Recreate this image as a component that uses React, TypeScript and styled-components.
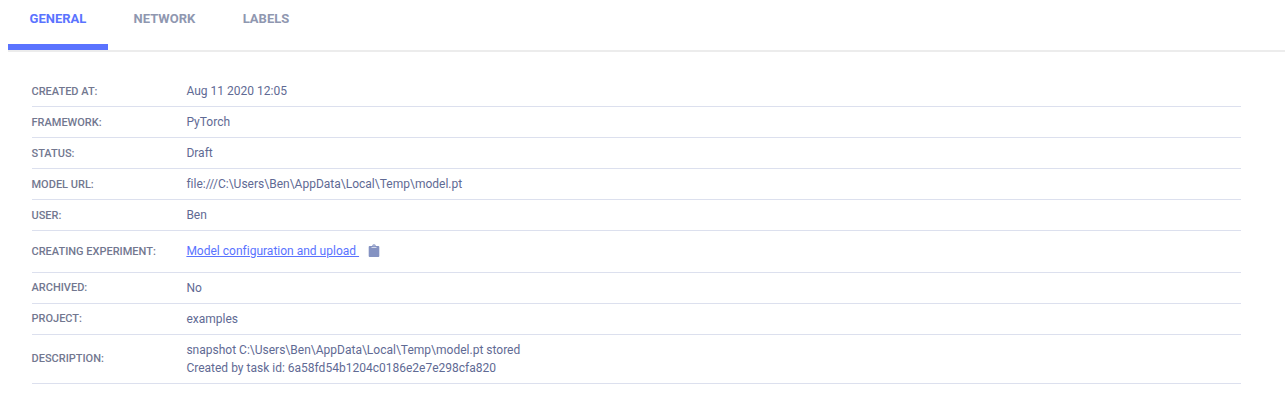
import React from "react";
import styled, { createGlobalStyle } from "styled-components";

const GlobalStyle = createGlobalStyle`
  body { margin: 0; background: #fff; font-family: Roboto, sans-serif; }
  * { box-sizing: border-box; }
`;

const Page = styled.main`
  height: 411px;
  overflow: hidden;
`;

const TabBar = styled.nav`
  display: flex;
  height: 52px;
  margin-left: 8px;
  border-bottom: 2px solid #ececec;
`;

const Tab = styled.a<{ $width: number; $active?: boolean }>`
  width: ${(p) => p.$width}px;
  height: 50px;
  padding-top: 11px;
  text-align: center;
  font-size: 13px;
  line-height: 16px;
  font-weight: 700;
  color: ${(p) => (p.$active ? "#5a73ff" : "#8f97b0")};
  border-bottom: 6px solid ${(p) => (p.$active ? "#5a73ff" : "transparent")};
`;

const Details = styled.section`
  margin: 24px 44px 0 32px;
`;

const Row = styled.div<{ $height?: number }>`
  display: flex;
  align-items: center;
  height: ${(p) => p.$height ?? 31}px;
  border-bottom: 1px solid #dce0ee;
`;

const Label = styled.div<{ $raised?: boolean }>`
  width: 154.9px;
  margin-left: -0.5px;
  padding-bottom: ${(p) => (p.$raised ? 2 : 0)}px;
  flex: none;
  font-size: 11px;
  font-weight: 500;
  color: #72778f;
  text-transform: uppercase;
`;

const Value = styled.div`
  display: flex;
  align-items: center;
  font-size: 12px;
  line-height: 18px;
  letter-spacing: 0.006px;
  color: #5f6a94;
  white-space: pre-line;
`;

const ExperimentLink = styled.a`
  padding-bottom: 2px;
  color: #5a73ff;
  text-decoration: underline;
  white-space: pre;
`;

const CopyIcon = styled.svg`
  margin: 0 0 1px 9px;
  width: 12px;
  height: 14px;
`;

const App = () => (
  <Page>
    <GlobalStyle />
    <TabBar>
      <Tab $width={100} $active>GENERAL</Tab>
      <Tab $width={112.8}>NETWORK</Tab>
      <Tab $width={90.4}>LABELS</Tab>
    </TabBar>
    <Details>
      <Row><Label>Created at:</Label><Value>Aug 11 2020 12:05</Value></Row>
      <Row><Label>Framework:</Label><Value>PyTorch</Value></Row>
      <Row><Label>Status:</Label><Value>Draft</Value></Row>
      <Row><Label>Model URL:</Label><Value>{"file:///C:\\Users\\Ben\\AppData\\Local\\Temp\\model.pt"}</Value></Row>
      <Row><Label>User:</Label><Value>Ben</Value></Row>
      <Row $height={42}>
        <Label>Creating experiment:</Label>
        <Value>
          <ExperimentLink>{"Model configuration and upload "}</ExperimentLink>
          <CopyIcon viewBox="0 0 12 14">
            <path
              fill="#8492c2"
              d="M1.6 2h2.6a1.8 1.8 0 0 1 3.6 0h2.6a.9.9 0 0 1 .9.9v9.2a.9.9 0 0 1-.9.9H1.6a.9.9 0 0 1-.9-.9V2.9a.9.9 0 0 1 .9-.9z"
            />
            <path stroke="#fff" strokeOpacity="0.65" strokeWidth="1" d="M3.5 3.5h5" />
            <circle cx="6" cy="1.8" r="0.5" fill="#fff" />
          </CopyIcon>
        </Value>
      </Row>
      <Row><Label $raised>Archived:</Label><Value>No</Value></Row>
      <Row><Label $raised>Project:</Label><Value>examples</Value></Row>
      <Row $height={49}>
        <Label $raised>Description:</Label>
        <Value>{"snapshot C:\\Users\\Ben\\AppData\\Local\\Temp\\model.pt stored\nCreated by task id: 6a58fd54b1204c0186e2e7e298cfa820"}</Value>
      </Row>
    </Details>
  </Page>
);

export default App;
